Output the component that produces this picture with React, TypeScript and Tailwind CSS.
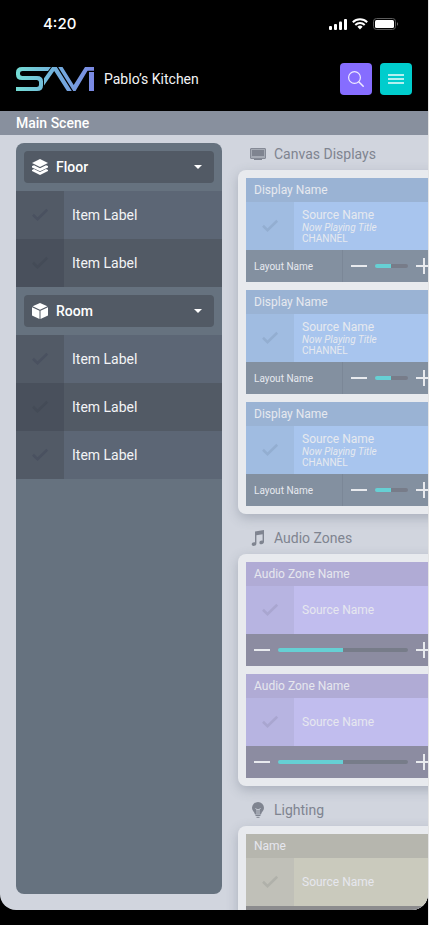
import { useState } from "react";
import type { ReactNode } from "react";

const PHONE_FONT = "font-['Roboto','Liberation_Sans',sans-serif]";

function Logo() {
  return (
    <svg className="h-6 w-[78px] shrink-0" viewBox="0 0 78 24" fill="none" role="img" aria-label="SAVI">
      <defs>
        <linearGradient id="savi" x1="0" y1="0" x2="78" y2="0" gradientUnits="userSpaceOnUse">
          <stop offset="0" stopColor="#74dcd3" />
          <stop offset="0.5" stopColor="#72b0dc" />
          <stop offset="1" stopColor="#7b88e4" />
        </linearGradient>
      </defs>
      <g fill="url(#savi)">
        <path d="M35 0H6Q0 0 0 5.500v2Q0 13 6 13h14.500q2.500 0 2.500 2.500v2q0 2.500-2.500 2.500H0v4h21q6 0 6-5.500v-4Q27 9 21 9H6.500Q4 9 4 7V6q0-2 2.500-2H32z" />
        <path d="M36 0h4.800l15 24H51L38.200 4 28 18.500v-7.200z" />
        <path d="M42.200 0h4.300l11.200 18L69 0h9v3.800h-6.500L59.500 24h-2.300z" />
        <path d="M73 5H78V24h-5z" />
      </g>
    </svg>
  );
}

function Check({ className }: { className: string }) {
  return (
    <svg
      className={`pointer-events-none col-start-1 row-start-1 size-6 ${className}`}
      viewBox="0 0 24 24"
      fill="none"
      stroke="currentColor"
      strokeWidth="2.600"
      aria-hidden="true"
    >
      <path d="M5 11.700 9.500 16.100 19.200 6.800" />
    </svg>
  );
}

function Tick({ label, className, check }: { label: string; className: string; check: string }) {
  return (
    <span className={`grid w-12 shrink-0 place-items-center self-stretch ${className}`}>
      <input type="checkbox" aria-label={label} className="col-start-1 row-start-1 size-full appearance-none" />
      <Check className={check} />
    </span>
  );
}

function LayersIcon() {
  return (
    <svg className="size-4 shrink-0 text-white" viewBox="0 0 16 16" fill="currentColor" aria-hidden="true">
      <path d="M8 0 16 4 8 8 0 4z" />
      <path d="M0 7.100 2 6.200 8 9.200l6-3 2 .9v1.300L8 12.300 0 8.400z" />
      <path d="M0 10.900 2 10l6 3 6-3 2 .9v1.200L8 16 0 12.100z" />
    </svg>
  );
}

function CubeIcon() {
  return (
    <svg className="size-4 shrink-0 text-white" viewBox="0 0 16 16" fill="currentColor" aria-hidden="true">
      <path d="M8 0l7.400 3.200L8 6.700.6 3.200z" />
      <path d="M0 4.300 7.500 7.800V16L0 12.500z" />
      <path d="M16 4.300 8.500 7.800V16L16 12.500z" />
    </svg>
  );
}

function Picker({ name, icon }: { name: string; icon: ReactNode }) {
  return (
    <div className="p-2">
      <label className="flex h-8 items-center gap-2 rounded bg-[#525a65] px-2">
        {icon}
        <select aria-label={name} className="min-w-0 flex-1 appearance-none bg-transparent text-sm font-medium text-white outline-none">
          <option>{name}</option>
        </select>
        <svg className="pointer-events-none size-4 shrink-0 text-white" viewBox="0 0 16 16" fill="currentColor" aria-hidden="true">
          <path d="M4 6h8l-4 4z" />
        </svg>
      </label>
    </div>
  );
}

function Items({ count }: { count: number }) {
  return (
    <ul>
      {Array.from({ length: count }, (_, i) => (
        <li key={i} className={`flex h-12 items-center ${i % 2 ? "bg-[#525a65]" : "bg-[#5c6675]"}`}>
          <Tick label="Item Label" className={i % 2 ? "bg-[#49505c]" : "bg-[#525a66]"} check={i % 2 ? "text-[#444b57]" : "text-[#4a5160]"} />
          <span className="px-2 text-sm text-[#f3f4f6]">Item Label</span>
        </li>
      ))}
    </ul>
  );
}

function Level({ label }: { label: string }) {
  const [value, setValue] = useState(50);
  return (
    <div className="flex min-w-0 flex-1 items-center gap-2 px-2 text-[#e8eaee]">
      <button type="button" aria-label={`Lower ${label}`} className="shrink-0" onClick={() => setValue(Math.max(0, value - 10))}>
        <svg className="block size-4" viewBox="0 0 16 16" stroke="currentColor" strokeWidth="2" aria-hidden="true">
          <path d="M0 8h16" />
        </svg>
      </button>
      <input
        type="range"
        aria-label={label}
        value={value}
        onChange={(e) => setValue(Number(e.target.value))}
        className="h-1 w-0 min-w-0 flex-1 appearance-none rounded-full [&::-webkit-slider-thumb]:size-0 [&::-webkit-slider-thumb]:appearance-none"
        style={{ background: `linear-gradient(to right, #66d0d4 ${value}%, #777c89 ${value}%)` }}
      />
      <button type="button" aria-label={`Raise ${label}`} className="shrink-0" onClick={() => setValue(Math.min(100, value + 10))}>
        <svg className="block size-4" viewBox="0 0 16 16" stroke="currentColor" strokeWidth="2" aria-hidden="true">
          <path d="M0 8h16M8 0v16" />
        </svg>
      </button>
    </div>
  );
}

function Section({ title, icon, children }: { title: string; icon: ReactNode; children: ReactNode }) {
  return (
    <section className="flex flex-col">
      <h2 className="flex h-8 items-center gap-2 px-3 text-sm text-[#7f8490]">
        {icon}
        {title}
      </h2>
      <div className="flex flex-col gap-2 rounded-lg bg-[#e8eaee] p-2 shadow-[0_4px_12px_rgba(80,90,110,0.3)]">{children}</div>
    </section>
  );
}

function Display() {
  return (
    <article className="text-[#e6e9ef]">
      <h3 className="flex h-6 items-center bg-[#9ab3d4] px-2 text-xs">Display Name</h3>
      <div className="flex h-12 items-center bg-[#a8c5ee]">
        <Tick label="Source Name" className="bg-[#a0bce1]" check="text-[#93aed1]" />
        <div className="flex flex-col px-2">
          <span className="text-xs leading-[14px]">Source Name</span>
          <span className="text-[10px] leading-[11px] italic">Now Playing Title</span>
          <span className="text-[10px] leading-[11px]">CHANNEL</span>
        </div>
      </div>
      <div className="flex h-8 items-stretch bg-[#8390a0]">
        <span className="flex w-[97px] shrink-0 items-center border-r border-[#7b8797] px-2 text-[10px]">Layout Name</span>
        <Level label="Display volume" />
      </div>
    </article>
  );
}

function Zone({ name, tone }: { name: string; tone: "audio" | "light" }) {
  const audio = tone === "audio";
  return (
    <article className="text-[#e6e7ee]">
      <h3 className={`flex h-6 items-center px-2 text-xs ${audio ? "bg-[#b0abd5]" : "bg-[#b6b6ae]"}`}>{name}</h3>
      <div className={`flex h-12 items-center ${audio ? "bg-[#c1bdee]" : "bg-[#cacabd]"}`}>
        <Tick label="Source Name" className={audio ? "bg-[#b7b4e1]" : "bg-[#c0c0b8]"} check={audio ? "text-[#a9a6d0]" : "text-[#b0b1aa]"} />
        <span className="px-2 text-xs">Source Name</span>
      </div>
      <div className={`flex h-8 items-stretch ${audio ? "bg-[#8c8ca1]" : "bg-[#8c8c8e]"}`}>
        <Level label={name} />
      </div>
    </article>
  );
}

function MonitorIcon() {
  return (
    <svg className="size-4 shrink-0" viewBox="0 0 16 16" fill="none" aria-hidden="true">
      <rect x="0.500" y="2.500" width="15" height="10" rx="0.500" fill="#a5aab4" stroke="#858a96" />
      <rect x="2" y="4" width="12" height="6" fill="#7f8490" />
      <path d="M4 13.500h8" stroke="#7f8490" />
    </svg>
  );
}

function NoteIcon() {
  return (
    <svg className="size-4 shrink-0" viewBox="0 0 16 16" fill="currentColor" aria-hidden="true">
      <path d="M5 1.500 14 0v12c0 1.200-1.200 2.300-2.600 2.300-1.200 0-2-.7-2-1.600 0-1.200 1.200-2.100 2.500-2.100.3 0 .5 0 .7.100V4.200l-6.200 1v8.300C6.400 14.900 5.200 16 3.700 16c-1.200 0-2-.7-2-1.700 0-1.200 1.200-2.100 2.500-2.100.3 0 .6 0 .8.100z" />
    </svg>
  );
}

function BulbIcon() {
  return (
    <svg className="size-4 shrink-0" viewBox="0 0 16 16" fill="none" aria-hidden="true">
      <path d="M8 0a6 6 0 0 0-6 6c0 2.500 2.500 4 3 6.500h6c.5-2.500 3-4 3-6.500a6 6 0 0 0-6-6z" fill="#7f8490" />
      <path d="M5.500 6 7 8v4M10.500 6 9 8v4M7 8l1-1 1 1" stroke="#d1d5de" strokeWidth="0.800" />
      <path d="M5.500 13.500h5M6.500 15.300h3" stroke="#7f8490" />
    </svg>
  );
}

function StatusBar() {
  return (
    <div className="flex h-12 shrink-0 items-center justify-between pr-[30px] pl-[43px] text-white">
      <time className="font-['Inter','Liberation_Sans',sans-serif] text-[15px] font-medium">4:20</time>
      <div className="flex items-center gap-[5px]">
        <svg className="h-3 w-[18px]" viewBox="0 0 18 12" fill="currentColor" aria-hidden="true">
          <rect x="0" y="8" width="3" height="4" rx="1" />
          <rect x="5" y="6" width="3" height="6" rx="1" />
          <rect x="10" y="3.500" width="3" height="8.500" rx="1" />
          <rect x="15" y="1" width="3" height="11" rx="1" />
        </svg>
        <svg className="h-3 w-4" viewBox="0 0 16 12" fill="none" stroke="currentColor" strokeWidth="2" aria-hidden="true">
          <path d="M.8 4.300a10.300 10.300 0 0 1 14.400 0M3.300 7a6.700 6.700 0 0 1 9.400 0" />
          <path d="M5.400 8.800a3.800 3.800 0 0 1 5.200 0L8 11.500z" fill="currentColor" stroke="none" />
        </svg>
        <svg className="h-3 w-[25px]" viewBox="0 0 25 12" aria-hidden="true">
          <rect x="0.500" y="0.500" width="22" height="11" rx="3" fill="none" stroke="#5c5c5c" />
          <rect x="2" y="2" width="19" height="8" rx="1.500" fill="#fff" />
          <path d="M24 4.200c.7.300 1 1 1 1.800s-.3 1.500-1 1.800z" fill="#6b6b6b" />
        </svg>
      </div>
    </div>
  );
}

export default function App() {
  return (
    <div className="bg-[#e5e5e5] pr-px">
      <div className={`flex h-screen flex-col overflow-hidden bg-black pb-[15px] ${PHONE_FONT}`}>
        <StatusBar />
        <header className="flex shrink-0 items-center gap-2 px-4 pt-[15px] pb-4">
          <Logo />
          <h1 className="flex-1 px-[2px] text-sm text-[#f3f4f6]">Pablo’s Kitchen</h1>
          <button type="button" aria-label="Search" className="grid size-8 place-items-center rounded bg-[#866dff] text-[#efebff]">
            <svg className="size-4" viewBox="0 0 16 16" fill="none" stroke="currentColor" strokeWidth="1.200" aria-hidden="true">
              <circle cx="6.500" cy="6.500" r="5.900" />
              <path d="m10.700 10.700 5 5" strokeWidth="1.500" />
            </svg>
          </button>
          <button type="button" aria-label="Menu" className="grid size-8 place-items-center rounded bg-[#00cdcd] text-[#b3f0f0]">
            <svg className="size-4" viewBox="0 0 16 16" stroke="currentColor" strokeWidth="2" aria-hidden="true">
              <path d="M0 4h16M0 8h16M0 12h16" />
            </svg>
          </button>
        </header>
        <main className="flex min-h-0 flex-1 flex-col overflow-hidden rounded-b-2xl bg-[#d1d5de]">
          <h2 className="flex h-6 shrink-0 items-center bg-[#88909e] px-4 text-sm font-medium text-white">Main Scene</h2>
          <div className="flex min-h-0 flex-1 gap-4 overflow-hidden pl-4">
            <nav aria-label="Locations" className="mt-2 mb-4 w-[206px] shrink-0 overflow-hidden rounded-lg bg-[#66727f]">
              <Picker name="Floor" icon={<LayersIcon />} />
              <Items count={2} />
              <Picker name="Room" icon={<CubeIcon />} />
              <Items count={3} />
            </nav>
            <div className="flex w-[210px] shrink-0 flex-col gap-2 pt-[3px]">
              <Section title="Canvas Displays" icon={<MonitorIcon />}>
                <Display />
                <Display />
                <Display />
              </Section>
              <Section title="Audio Zones" icon={<NoteIcon />}>
                <Zone name="Audio Zone Name" tone="audio" />
                <Zone name="Audio Zone Name" tone="audio" />
              </Section>
              <Section title="Lighting" icon={<BulbIcon />}>
                <Zone name="Name" tone="light" />
              </Section>
            </div>
          </div>
        </main>
      </div>
    </div>
  );
}
